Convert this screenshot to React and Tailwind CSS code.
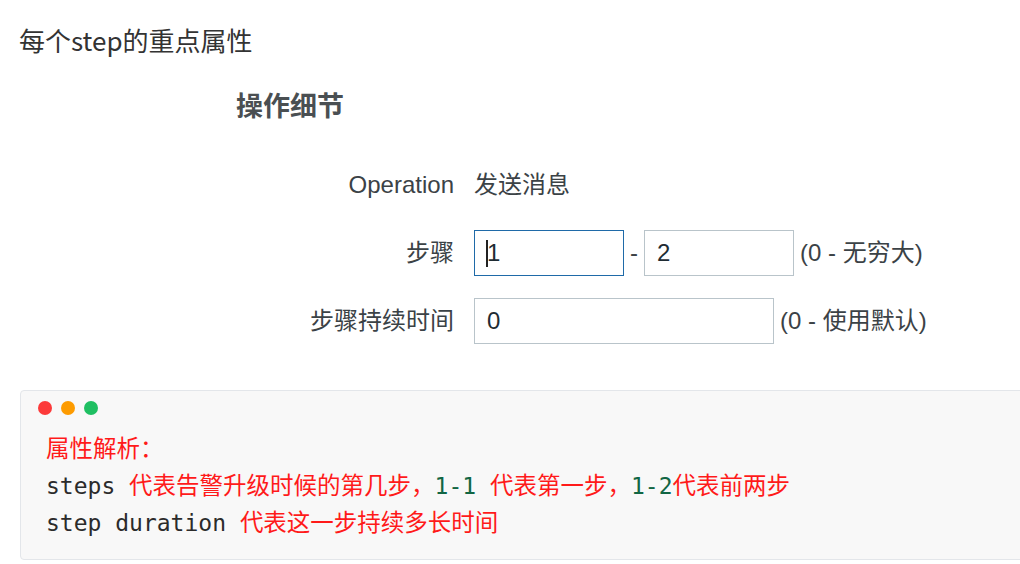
import React from 'react';

const formFont = { fontFamily: '"Liberation Sans", "Noto Sans CJK SC", sans-serif' };
const codeFont = { fontFamily: '"DejaVu Sans Mono", "Noto Sans CJK SC", monospace' };

function Field({ width, focused, children }) {
  return (
    <div
      className={`relative flex h-[46px] items-center border pl-[12px] text-[24px] text-[#1f2c33] bg-white ${width} ${
        focused ? 'border-[#1f6aa8]' : 'border-[#b9c4ca]'
      }`}
    >
      {focused && <span className="absolute left-[11px] top-[9px] h-[27px] w-[2px] bg-[#222]" />}
      {children}
    </div>
  );
}

export default function App() {
  return (
    <div className="min-h-[564px] w-[1020px] overflow-hidden bg-white pl-[19px] pt-[22px]">
      <h1
        className="text-[26px] leading-[36px] text-[#333]"
        style={{ fontFamily: '"Noto Sans CJK SC", sans-serif' }}
      >
        每个step的重点属性
      </h1>

      {/* Zabbix style form */}
      <div style={formFont} className="text-[#3b4246]">
        <h2 className="ml-[217px] mt-[32px] text-[27px] font-bold leading-[34px] text-[#4a4f52]">
          操作细节
        </h2>

        <div className="mt-[38px] grid grid-cols-[435px_1fr] gap-x-[20px] gap-y-[22px] text-[24px]">
          <div className="flex h-[46px] items-center justify-end">Operation</div>
          <div className="flex h-[46px] items-center">发送消息</div>

          <div className="flex h-[46px] items-center justify-end">步骤</div>
          <div className="flex items-center">
            <Field width="w-[150px]" focused>
              1
            </Field>
            <span className="mx-[6px]">-</span>
            <Field width="w-[150px]">2</Field>
            <span className="ml-[6px]">(0 - 无穷大)</span>
          </div>

          <div className="flex h-[46px] items-center justify-end">步骤持续时间</div>
          <div className="flex items-center">
            <Field width="w-[300px]">0</Field>
            <span className="ml-[6px]">(0 - 使用默认)</span>
          </div>
        </div>
      </div>

      {/* code block */}
      <div className="ml-[1px] mt-[46px] w-[1040px] rounded-[4px] border border-[#e3e6ea] bg-[#f8f8f8] pb-[17px]">
        <div className="flex gap-[9px] pl-[17px] pt-[10px]">
          <span className="h-[14px] w-[14px] rounded-full bg-[#fc3a3a]" />
          <span className="h-[14px] w-[14px] rounded-full bg-[#fd9b00]" />
          <span className="h-[14px] w-[14px] rounded-full bg-[#1fbf62]" />
        </div>
        <div style={codeFont} className="mt-[16px] pl-[25px] text-[23px] leading-[37px] text-[#2b2b2b]">
          <div className="text-[23.5px] text-[#ff1a1a]">属性解析：</div>
          <div>
            steps <span className="text-[23.5px] text-[#ff1a1a]">代表告警升级时候的第几步，</span>
            <span className="text-[#116644]">1-1</span>{' '}
            <span className="text-[23.5px] text-[#ff1a1a]">代表第一步，</span>
            <span className="text-[#116644]">1-2</span>
            <span className="text-[23.5px] text-[#ff1a1a]">代表前两步</span>
          </div>
          <div>
            step duration <span className="text-[23.5px] text-[#ff1a1a]">代表这一步持续多长时间</span>
          </div>
        </div>
      </div>
    </div>
  );
}
